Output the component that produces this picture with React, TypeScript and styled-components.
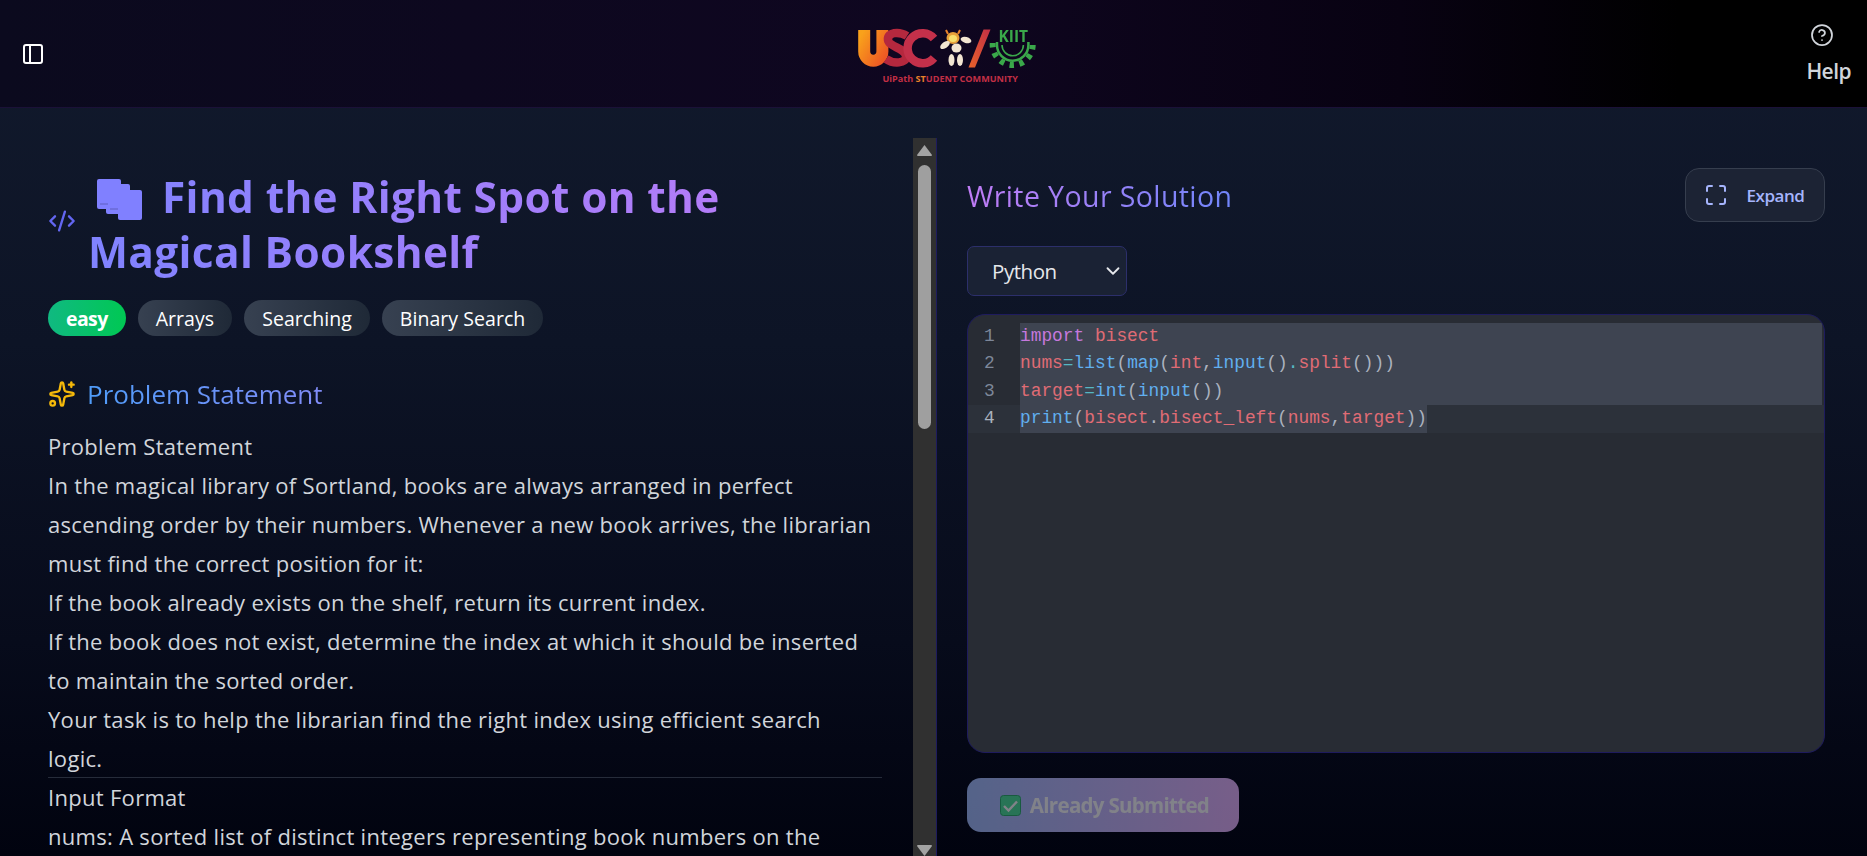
import styled, { createGlobalStyle } from 'styled-components';
import { CircleHelp, CodeXml, Maximize, PanelLeft, Sparkles, ChevronDown } from 'lucide-react';

const GlobalStyle = createGlobalStyle`
  html, body {
    margin: 0;
    height: 100%;
    background: #020617;
  }
  * {
    box-sizing: border-box;
  }
`;

const sans = `'Open Sans', 'Noto Sans', sans-serif`;
const mono = `'Liberation Mono', 'DejaVu Sans Mono', monospace`;

const Page = styled.div`
  width: 1867px;
  height: 856px;
  display: flex;
  flex-direction: column;
  overflow: hidden;
  font-family: ${sans};
  background: linear-gradient(180deg, #121a2d 0%, #0d1426 40%, #070b1b 75%, #01030f 100%);
`;

const Header = styled.header`
  height: 108px;
  flex: none;
  display: flex;
  align-items: center;
  justify-content: space-between;
  padding: 0 16px 0 21px;
  border-bottom: 1px solid #1b1138;
  background: linear-gradient(90deg, #0b0a1e 0%, #0f0620 50%, #080212 75%, #000 90%);
  color: #fff;
`;

const LogoWrap = styled.div`
  display: flex;
  flex-direction: column;
  align-items: center;
  width: 190px;
  margin: 6px 0 0 49px;
  svg {
    overflow: visible;
    filter: blur(0.3px);
  }
`;

const LogoCaption = styled.div`
  font-size: 9.1px;
  line-height: 12px;
  font-weight: 700;
  color: #c22f45;
  white-space: nowrap;
  margin-top: -1px;
  span {
    color: #e8822a;
  }
`;

const HelpBlock = styled.div`
  display: flex;
  flex-direction: column;
  align-items: flex-start;
  gap: 11px;
  color: #d1d5db;
  font-size: 21px;
  font-weight: 600;
  line-height: 27px;
  letter-spacing: -0.55px;
  svg {
    margin-left: 4px;
  }
`;

const Main = styled.main`
  flex: 1;
  min-height: 0;
  display: flex;
`;

const ProblemPane = styled.section`
  width: 937px;
  flex: none;
  margin-top: 30px;
  display: flex;
  border-right: 1px solid #1e1b5e;
`;

const ProblemScroll = styled.div`
  flex: 1;
  min-width: 0;
  overflow: hidden;
  padding: 32px 31px 0 48px;
`;

const ScrollTrack = styled.div`
  width: 23px;
  flex: none;
  display: flex;
  flex-direction: column;
  align-items: center;
  background: #303030;
  padding-top: 7px;
`;

const ScrollThumb = styled.div`
  width: 13px;
  height: 264px;
  margin-top: 9px;
  border-radius: 7px;
  background: #9f9f9f;
  flex: none;
`;

const ScrollSpacer = styled.div`
  flex: 1;
`;

const Arrow = styled.svg`
  width: 15px;
  height: 11px;
  flex: none;
  fill: #a3a3a3;
`;

const TitleRow = styled.div`
  display: flex;
  align-items: center;
  gap: 12px;
`;

const TitleIcon = styled(CodeXml)`
  flex: none;
  margin-top: -7px;
  color: #6366f1;
`;

const Title = styled.h1`
  margin: 0;
  max-width: 640px;
  font-size: 42.4px;
  line-height: 54.6px;
  font-weight: 700;
  letter-spacing: 0.35px;
  color: #8b85ff;
  background: linear-gradient(90deg, #8083ff 0%, #b47cf8 100%);
  -webkit-background-clip: text;
  background-clip: text;
  -webkit-text-fill-color: transparent;
  svg {
    vertical-align: -7px;
    margin: 0 20px 0 9px;
  }
`;

const TagRow = styled.div`
  display: flex;
  gap: 12px;
  margin-top: 21px;
`;

const Tag = styled.span<{ $level?: boolean }>`
  height: 36px;
  padding: 0 18px;
  border-radius: 18px;
  display: flex;
  align-items: center;
  font-size: 19.5px;
  letter-spacing: ${p => (p.$level ? '-0.6px' : '0.05px')};
  font-weight: ${p => (p.$level ? 700 : 400)};
  color: #fff;
  background: ${p =>
    p.$level
      ? 'linear-gradient(90deg, #10b981, #00c853)'
      : 'linear-gradient(90deg, #374151, #1f2937)'};
`;

const SectionHeading = styled.h2`
  margin: 40px 0 0;
  display: flex;
  align-items: center;
  gap: 11px;
  font-size: 26px;
  line-height: 36px;
  font-weight: 500;
  span {
    background: linear-gradient(90deg, #4f9cf9, #818cf8);
    -webkit-background-clip: text;
    background-clip: text;
    -webkit-text-fill-color: transparent;
  }
`;

const Statement = styled.div`
  margin-top: 15px;
  color: #d1d5db;
  font-size: 22px;
  line-height: 39px;
  letter-spacing: 0.3px;
`;

const StatementLine = styled.div<{ $divided?: boolean }>`
  padding-right: 8px;
  ${p => p.$divided && 'border-top: 1px solid #262c3a; margin-top: -1px;'}
`;

const EditorPane = styled.section`
  flex: 1;
  min-width: 0;
  display: flex;
  flex-direction: column;
  padding: 60px 42px 0 30px;
`;

const EditorHead = styled.div`
  display: flex;
  align-items: center;
  justify-content: space-between;
`;

const EditorTitle = styled.h2`
  margin: 0 0 -2px;
  font-size: 28.5px;
  line-height: 38px;
  font-weight: 500;
  letter-spacing: 0.4px;
  background: linear-gradient(90deg, #c07cf5, #7186fb);
  -webkit-background-clip: text;
  background-clip: text;
  -webkit-text-fill-color: transparent;
`;

const ExpandButton = styled.button`
  width: 140px;
  height: 54px;
  display: flex;
  align-items: center;
  justify-content: center;
  gap: 19px;
  padding: 0 2px 0 0;
  border: 1px solid #363e4e;
  border-radius: 14px;
  background: #1c2334;
  color: #a5b4fc;
  font-family: ${sans};
  font-size: 17px;
  font-weight: 600;
  letter-spacing: -0.45px;
`;

const LanguageSelect = styled.div`
  width: 160px;
  height: 50px;
  margin-top: 24px;
  display: flex;
  align-items: center;
  justify-content: space-between;
  padding: 0 2px 0 24px;
  border: 1px solid #2c2f6b;
  border-radius: 7px;
  background: #1a2234;
  color: #e5e7eb;
  font-size: 20.5px;
  letter-spacing: -0.45px;
`;

const CodeBox = styled.div`
  height: 439px;
  margin-top: 18px;
  padding-top: 8px;
  border: 1px solid #1e1b5e;
  border-radius: 18px;
  background: #282c34;
  overflow: hidden;
  font-family: ${mono};
  font-size: 17.85px;
  line-height: 27.4px;
  color: #abb2bf;
`;

const CodeRow = styled.div<{ $active?: boolean }>`
  display: flex;
  height: 27.4px;
  white-space: pre;
  background: ${p => (p.$active ? '#2c313a' : 'transparent')};
`;

const LineNumber = styled.span<{ $active?: boolean }>`
  width: 52px;
  flex: none;
  padding-left: 16px;
  color: ${p => (p.$active ? '#aab1be' : '#7d8799')};
`;

const CodeText = styled.span<{ $fill?: boolean }>`
  background: #3e4451;
  ${p => p.$fill && 'flex: 1; margin-right: 2px;'}
`;

const Kw = styled.span`
  color: #c678dd;
`;
const Nm = styled.span`
  color: #e06c75;
`;
const Fn = styled.span`
  color: #61afef;
`;
const Op = styled.span`
  color: #56b6c2;
`;

const SubmitButton = styled.button`
  width: 272px;
  height: 54px;
  margin-top: 25px;
  display: flex;
  align-items: center;
  justify-content: center;
  gap: 9px;
  padding: 0 0 0 3px;
  border: none;
  border-radius: 14px;
  background: linear-gradient(90deg, #a5c0ff, #ebb6ff);
  opacity: 0.5;
  color: #fff;
  font-family: ${sans};
  font-size: 20.5px;
  font-weight: 700;
  letter-spacing: -0.7px;
`;

function BooksGlyph() {
  return (
    <svg width="45" height="41" viewBox="0 0 45 41" fill="#8080ff">
      <rect x="0" y="0" width="24" height="30" rx="2" />
      <rect x="9" y="5" width="24" height="30" rx="2" />
      <rect x="21" y="11" width="24" height="30" rx="2" />
      <path d="M3 25h8M13 30h8" stroke="#5f5fc0" strokeWidth="1" />
    </svg>
  );
}

function CheckGlyph() {
  return (
    <svg width="21" height="21" viewBox="0 0 21 21">
      <rect x="0.5" y="0.5" width="20" height="20" rx="3" fill="#4fe29a" stroke="#2fb06e" />
      <path d="M4 11l4.5 4.5L17 6.5" fill="none" stroke="#fff" strokeWidth="2.4" />
    </svg>
  );
}

function UscLogo() {
  return (
    <LogoWrap>
      <svg width="190" height="46" viewBox="0 0 190 46">
        <defs>
          <linearGradient id="uGrad" x1="0" y1="0" x2="1" y2="1">
            <stop offset="0" stopColor="#f9a11b" />
            <stop offset="1" stopColor="#ee5a24" />
          </linearGradient>
          <linearGradient id="slashGrad" x1="1" y1="0" x2="0" y2="1">
            <stop offset="0" stopColor="#c22f45" />
            <stop offset="1" stopColor="#e8622a" />
          </linearGradient>
        </defs>
        <path d="M9.2 2V23.6a9.1 9.1 0 0 0 18.2 0V2" fill="none" stroke="url(#uGrad)" strokeWidth="12" />
        <path
          d="M52 8C44 3 32 4 33 12C34 19 50 20 51 28C52 36 38 36 31 31"
          fill="none"
          stroke="#b5283e"
          strokeWidth="8.5"
        />
        <path d="M79 10.5A15 15 0 1 0 79 30" fill="none" stroke="#c4304a" strokeWidth="8.5" />
        <ellipse cx="98" cy="10" rx="6.5" ry="6" fill="#e8a13a" />
        <ellipse cx="98" cy="10.5" rx="4" ry="3.5" fill="#f7df6b" />
        <path d="M91 2l2 4M105 2l-2 4" stroke="#e8822a" strokeWidth="2" />
        <ellipse cx="90" cy="17" rx="5.5" ry="3" fill="#f3e6d2" transform="rotate(-35 90 17)" />
        <ellipse cx="111" cy="12" rx="5.5" ry="3" fill="#f3e6d2" transform="rotate(15 111 12)" />
        <ellipse cx="101.5" cy="20" rx="5" ry="4.5" fill="#f3e6d2" />
        <ellipse cx="96.5" cy="32" rx="3" ry="6" fill="#f3e6d2" />
        <ellipse cx="105" cy="32" rx="3" ry="6" fill="#f3e6d2" />
        <polygon points="128.5,1.5 135.5,1.5 120,39.5 113.5,39.5" fill="url(#slashGrad)" />
        <text x="158.3" y="14" textAnchor="middle" fontFamily={sans} fontSize="15.5" fontWeight="700" fill="#3aa84a">
          KIIT
        </text>
        <path d="M147 17a10.7 10.7 0 0 0 21.4 0" fill="none" stroke="#3aa84a" strokeWidth="1.6" />
        <path d="M142 14v3a15.7 15.7 0 0 0 31.4 0v-3" fill="none" stroke="#3aa84a" strokeWidth="2.5" />
        <path
          d="M137.7 15v2a20 20 0 0 0 40 0v-2"
          fill="none"
          stroke="#3aa84a"
          strokeWidth="6"
          strokeDasharray="4.5 5.5"
        />
      </svg>
      <LogoCaption>
        UiPath <span>ST</span>UDENT COMMUNITY
      </LogoCaption>
    </LogoWrap>
  );
}

const statementLines = [
  'Problem Statement',
  'In the magical library of Sortland, books are always arranged in perfect ascending order by their numbers. Whenever a new book arrives, the librarian must find the correct position for it:',
  'If the book already exists on the shelf, return its current index.',
  'If the book does not exist, determine the index at which it should be inserted to maintain the sorted order.',
  'Your task is to help the librarian find the right index using efficient search logic.',
];

export default function App() {
  return (
    <Page>
      <GlobalStyle />
      <Header>
        <PanelLeft size={24} strokeWidth={2} />
        <UscLogo />
        <HelpBlock>
          <CircleHelp size={24} strokeWidth={1.75} />
          Help
        </HelpBlock>
      </Header>
      <Main>
        <ProblemPane>
          <ProblemScroll>
            <TitleRow>
              <TitleIcon size={28} strokeWidth={2} />
              <Title>
                <BooksGlyph />
                Find the Right Spot on the Magical Bookshelf
              </Title>
            </TitleRow>
            <TagRow>
              <Tag $level>easy</Tag>
              <Tag>Arrays</Tag>
              <Tag>Searching</Tag>
              <Tag>Binary Search</Tag>
            </TagRow>
            <SectionHeading>
              <Sparkles size={28} color="#f5b90a" strokeWidth={2} />
              <span>Problem Statement</span>
            </SectionHeading>
            <Statement>
              {statementLines.map(line => (
                <StatementLine key={line}>{line}</StatementLine>
              ))}
              <StatementLine $divided>Input Format</StatementLine>
              <StatementLine>nums: A sorted list of distinct integers representing book numbers on the</StatementLine>
            </Statement>
          </ProblemScroll>
          <ScrollTrack>
            <Arrow viewBox="0 0 15 11">
              <path d="M7.5 0L15 10q0 1-1 1H1q-1 0-1-1z" />
            </Arrow>
            <ScrollThumb />
            <ScrollSpacer />
            <Arrow viewBox="0 0 15 11">
              <path d="M7.5 11L15 1q0-1-1-1H1q-1 0-1 1z" />
            </Arrow>
          </ScrollTrack>
        </ProblemPane>
        <EditorPane>
          <EditorHead>
            <EditorTitle>Write Your Solution</EditorTitle>
            <ExpandButton>
              <Maximize size={24} strokeWidth={2} />
              Expand
            </ExpandButton>
          </EditorHead>
          <LanguageSelect>
            Python
            <ChevronDown size={22} strokeWidth={2} />
          </LanguageSelect>
          <CodeBox>
            <CodeRow>
              <LineNumber>1</LineNumber>
              <CodeText $fill>
                <Kw>import</Kw> <Nm>bisect</Nm>
              </CodeText>
            </CodeRow>
            <CodeRow>
              <LineNumber>2</LineNumber>
              <CodeText $fill>
                <Nm>nums</Nm>
                <Op>=</Op>
                <Fn>list</Fn>(<Fn>map</Fn>(<Nm>int</Nm>,<Fn>input</Fn>()<Op>.</Op>
                <Nm>split</Nm>()))
              </CodeText>
            </CodeRow>
            <CodeRow>
              <LineNumber>3</LineNumber>
              <CodeText $fill>
                <Nm>target</Nm>
                <Op>=</Op>
                <Fn>int</Fn>(<Fn>input</Fn>())
              </CodeText>
            </CodeRow>
            <CodeRow $active>
              <LineNumber $active>4</LineNumber>
              <CodeText>
                <Fn>print</Fn>(<Nm>bisect</Nm>.<Nm>bisect_left</Nm>(<Nm>nums</Nm>,<Nm>target</Nm>))
              </CodeText>
            </CodeRow>
          </CodeBox>
          <SubmitButton disabled>
            <CheckGlyph />
            Already Submitted
          </SubmitButton>
        </EditorPane>
      </Main>
    </Page>
  );
}
